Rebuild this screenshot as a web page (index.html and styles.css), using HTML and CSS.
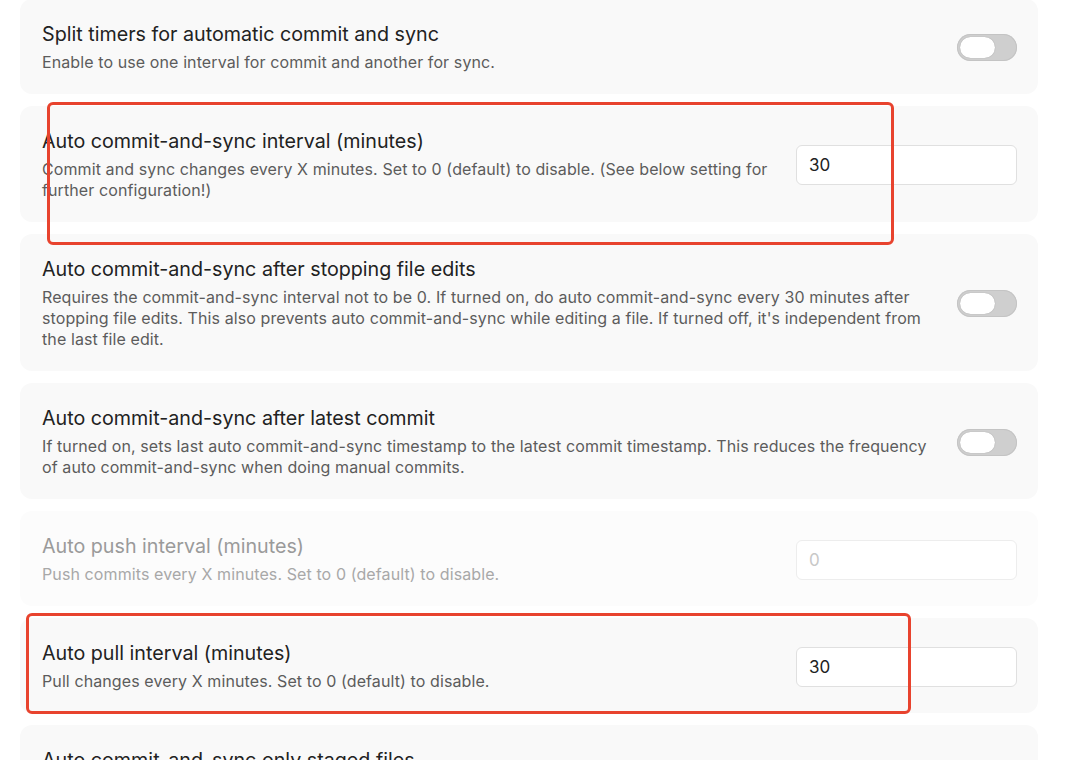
FILE: index.html
```html
<!DOCTYPE html>
<html lang="en">
	<head>
		<meta charset="UTF-8" />
		<meta name="viewport" content="width=device-width, initial-scale=1.0" />
		<title>Git settings</title>
		<link rel="stylesheet" href="styles.css">
	</head>
	<body>
		<div class="settings">
			<div class="setting-item">
				<div class="setting-info">
					<div class="setting-name">Split timers for automatic commit and sync</div>
					<div class="setting-desc">Enable to use one interval for commit and another for sync.</div>
				</div>
				<div class="setting-control"><div class="toggle"></div></div>
			</div>

			<div class="setting-item">
				<div class="setting-info">
					<div class="setting-name">Auto commit-and-sync interval (minutes)</div>
					<div class="setting-desc">Commit and sync changes every X minutes. Set to 0 (default) to disable. (See below setting for further configuration!)</div>
				</div>
				<div class="setting-control"><input class="text-input" type="text" value="30" /></div>
			</div>

			<div class="setting-item">
				<div class="setting-info">
					<div class="setting-name">Auto commit-and-sync after stopping file edits</div>
					<div class="setting-desc">Requires the commit-and-sync interval not to be 0. If turned on, do auto commit-and-sync every 30 minutes after stopping file edits. This also prevents auto commit-and-sync while editing a file. If turned off, it's independent from the last file edit.</div>
				</div>
				<div class="setting-control"><div class="toggle"></div></div>
			</div>

			<div class="setting-item">
				<div class="setting-info">
					<div class="setting-name">Auto commit-and-sync after latest commit</div>
					<div class="setting-desc">If turned on, sets last auto commit-and-sync timestamp to the latest commit timestamp. This reduces the frequency of auto commit-and-sync when doing manual commits.</div>
				</div>
				<div class="setting-control"><div class="toggle"></div></div>
			</div>

			<div class="setting-item disabled">
				<div class="setting-info">
					<div class="setting-name">Auto push interval (minutes)</div>
					<div class="setting-desc">Push commits every X minutes. Set to 0 (default) to disable.</div>
				</div>
				<div class="setting-control"><input class="text-input" type="text" placeholder="0" disabled /></div>
			</div>

			<div class="setting-item">
				<div class="setting-info">
					<div class="setting-name">Auto pull interval (minutes)</div>
					<div class="setting-desc">Pull changes every X minutes. Set to 0 (default) to disable.</div>
				</div>
				<div class="setting-control"><input class="text-input" type="text" value="30" /></div>
			</div>

			<div class="setting-item">
				<div class="setting-info">
					<div class="setting-name">Auto commit-and-sync only staged files</div>
					<div class="setting-desc">If turned on, only staged files are committed on auto commit-and-sync.</div>
				</div>
				<div class="setting-control"><div class="toggle"></div></div>
			</div>
		</div>

		<!-- highlight marks drawn over the list -->
		<div class="mark mark-interval"></div>
		<div class="mark mark-pull"></div>
	</body>
</html>
```

FILE: styles.css
```css
body {
	margin: 0;
	background-color: #ffffff;
	font-family: Inter, "Liberation Sans", sans-serif;
	overflow: hidden;
}
.settings {
	display: flex;
	flex-direction: column;
	gap: 12px;
	padding: 0 42px 0 20px;
	margin-top: -1px;
}
.setting-item {
	display: flex;
	align-items: center;
	gap: 18px;
	background-color: #f9f9f9;
	border-radius: 12px;
	padding: 23px 21px 21px 22px;
}
.setting-info {
	flex: 1;
}
.setting-name {
	font-size: 19.7px;
	line-height: 24px;
	color: #222222;
}
.setting-desc {
	margin-top: 6px;
	font-size: 16px;
	line-height: 21px;
	letter-spacing: 0.1px;
	color: #5c5c5c;
}
.setting-control {
	display: flex;
	align-items: center;
}
.text-input {
	box-sizing: border-box;
	width: 221px;
	height: 40px;
	padding: 0 12px;
	border: 1px solid #e0e0e0;
	border-radius: 6px;
	background-color: #ffffff;
	font-family: Inter, "Liberation Sans", sans-serif;
	font-size: 17px;
	color: #222222;
	outline: none;
}
.toggle {
	position: relative;
	width: 60px;
	height: 27px;
	border-radius: 14px;
	background-color: #cfcfcf;
	box-shadow: inset 0 0 0 1px #c4c4c4;
}
.toggle::after {
	content: "";
	position: absolute;
	left: 3px;
	top: 3px;
	width: 35px;
	height: 21px;
	border-radius: 11px;
	background-color: #ffffff;
	box-shadow: 0 0 1px rgba(0, 0, 0, 0.3);
}
.disabled {
	background-color: #fcfcfc;
}
.disabled .setting-name {
	color: #9a9a9a;
}
.disabled .setting-desc {
	color: #a8a8a8;
}
.disabled .text-input {
	border-color: #ededed;
}
.disabled .text-input::placeholder {
	color: #c8c8c8;
}
.mark {
	position: absolute;
	border: 3px solid #e8432e;
	border-radius: 6px;
	box-sizing: border-box;
}
.mark-interval {
	left: 47px;
	top: 102px;
	width: 847px;
	height: 143px;
}
.mark-pull {
	left: 26px;
	top: 613px;
	width: 885px;
	height: 101px;
}
```
